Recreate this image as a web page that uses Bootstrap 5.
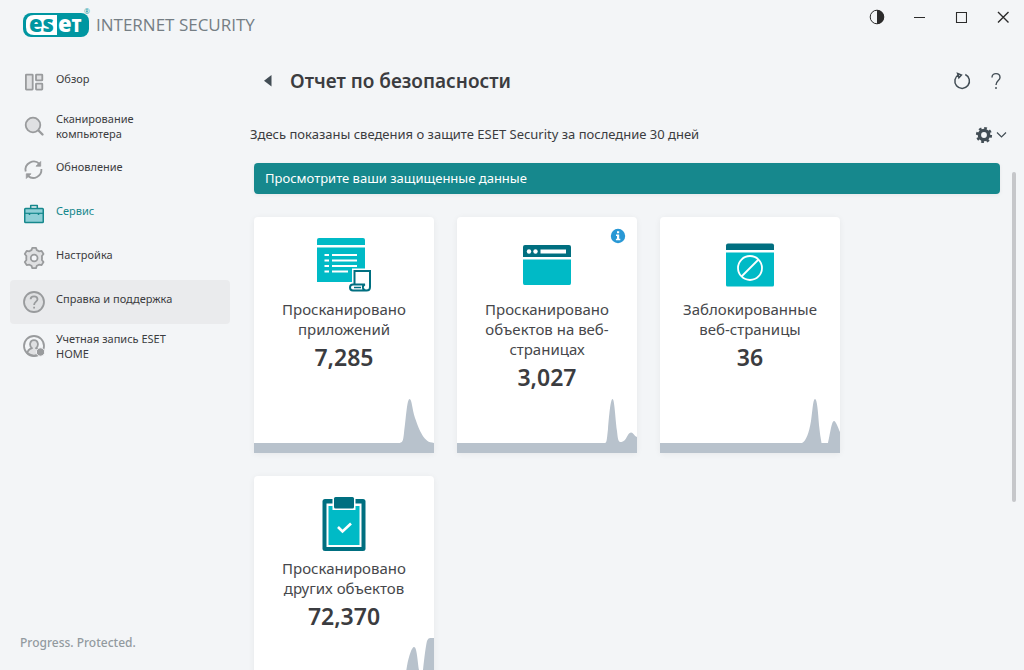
<!DOCTYPE html>
<html lang="ru">
<head>
<meta charset="utf-8">
<meta name="viewport" content="width=device-width, initial-scale=1">
<title>ESET Internet Security</title>
<link rel="stylesheet" href="https://cdn.jsdelivr.net/npm/bootstrap@5.3.0/dist/css/bootstrap.min.css">
<style>
  :root { --teal: #16888d; --aqua: #00bac6; --deep: #006f80; --ink: #3b3c40; --slate: #424d55; }
  body { font-family: "Noto Sans", "Open Sans", sans-serif; background: #f3f5f7; color: var(--ink); font-size: 13px; }
  svg { display: block; flex: none; }
  .topbar { height: 50px; padding-left: 20px; flex: none; }
  .product { font-family: "Open Sans", sans-serif; font-size: 17px; font-weight: 400; color: #757e84; line-height: 24px; }
  .tool { width: 42px; height: 34px; padding: 0; border: 0; color: #2b2b2b; display: flex; align-items: center; justify-content: center; }
  .tool-sm { width: 34px; color: var(--slate); }
  .sidebar { width: 240px; padding: 10px 10px 19px; flex: none; }
  .side-link { height: 44px; padding: 0 12px; gap: 10px; border-radius: 4px; font-size: 11px; line-height: 15px; color: var(--ink); text-decoration: none; }
  .side-link span { min-height: 23px; max-width: 124px; }
  .side-link:hover, .side-link.is-hover { background: #eaebed; }
  .side-link.is-active { color: var(--teal); }
  .ico { fill: #dfe0e2; stroke: #999b9d; stroke-width: 1.8; stroke-linejoin: round; }
  .slogan { font-size: 12px; font-weight: 500; line-height: 16px; color: #929a9f; padding-left: 10px; }
  .page-head { height: 42px; margin-top: 10px; padding-right: 11px; gap: 10px; flex: none; }
  .page-title { font-size: 19px; font-weight: 600; line-height: 26px; }
  .back { width: 24px; height: 28px; }
  .intro { height: 42px; margin: 12px 17px 7px 10px; flex: none; }
  .gear { gap: 3px; padding: 0; border: 0; color: var(--slate); }
  .banner { background: var(--teal); color: #fff; border-radius: 4px; line-height: 21px; padding: 5px 11px; font-size: 13px; border: 0; text-align: left; box-shadow: 0 1px 4px rgba(0,0,0,.06); }
  .report { padding: 0 8px 0 14px; gap: 12px; min-height: 0; }
  .tiles { gap: 23px; margin-top: 23px; }
  .tile { width: 180px; height: 236px; padding-top: 20px; border: 0; border-radius: 4px 4px 0 0; box-shadow: 0 1px 6px rgba(0,0,0,.06); overflow: hidden; flex: none; }
  .tile h2 { font-size: 15px; font-weight: 400; line-height: 20px; margin: 2px 16px 4px; color: #46474b; }
  .tile .total { font-size: 23px; font-weight: 600; line-height: 28px; }
  .chart { fill: #b8c2cc; width: 100%; }
  .info { position: absolute; top: 11px; right: 11px; }
  .thumb { width: 4px; height: 65%; margin-top: 9px; border-radius: 2px; background: #c6c7ca; flex: none; }
</style>
</head>
<body>
<div class="vh-100 d-flex flex-column overflow-hidden">
  <header class="topbar d-flex">
    <div class="d-flex align-items-center">
      <svg width="72" height="34" viewBox="20 8 72 34" role="img" aria-label="ESET">
        <rect x="23" y="13" width="66" height="24" rx="8" fill="#0096a1"/>
        <path d="M57 15H34Q26 15 26 23v4Q26 35 34 35H57z" fill="#fff"/>
        <g font-family="Open Sans, sans-serif" font-weight="800">
          <text x="29" y="32" font-size="22" fill="#0096a1">es</text>
          <text x="58" y="32" font-size="22" fill="#fff">e<tspan font-size="17">T</tspan></text>
          <text x="84" y="14" font-size="7" font-weight="400" fill="#0096a1">®</text>
        </g>
      </svg>
      <span class="product ms-1">INTERNET SECURITY</span>
    </div>
    <div class="d-flex ms-auto">
      <button class="btn tool" aria-label="Контрастность"><svg width="16" height="16" viewBox="0 0 16 16"><circle cx="8" cy="8" r="6.8" fill="none" stroke="currentColor"/><path d="M8 1a7 7 0 0 1 0 14z" fill="currentColor"/></svg></button>
      <button class="btn tool" aria-label="Свернуть"><svg width="12" height="12"><path d="M1 6.500h11" stroke="currentColor"/></svg></button>
      <button class="btn tool" aria-label="Развернуть"><svg width="12" height="12"><path d="M1.500 1.500h10v10h-10z" fill="none" stroke="currentColor" stroke-width="1.100"/></svg></button>
      <button class="btn tool" aria-label="Закрыть"><svg width="12" height="12"><path d="M1 1l10.500 10.500M11.500 1L1 11.500" stroke="currentColor" stroke-width="1.400"/></svg></button>
    </div>
  </header>

  <div class="d-flex flex-grow-1 overflow-hidden">
    <aside class="sidebar d-flex flex-column">
      <nav class="d-flex flex-column">
        <a href="#" class="side-link d-flex align-items-center">
          <svg class="ico" width="24" height="24"><rect x="3.900" y="4.600" width="6.800" height="15" rx=".5"/><rect x="14" y="4.600" width="6.300" height="5.800" rx=".5"/><rect x="14" y="13.600" width="6.300" height="6" rx=".5"/></svg>
          <span>Обзор</span></a>
        <a href="#" class="side-link d-flex align-items-center">
          <svg class="ico" width="24" height="24"><path d="M16.500 16.500l4 4" stroke-width="2.400" stroke-linecap="round"/><circle cx="11" cy="11" r="7.300"/></svg>
          <span>Сканирование компьютера</span></a>
        <a href="#" class="side-link d-flex align-items-center">
          <svg class="ico" width="24" height="24"><path fill="none" d="M3.700 13.500A8.200 8.200 0 0 1 17.500 6M19.400 11A8.200 8.200 0 0 1 6 18"/><path d="M18.700 3.500v4.700H14zM4.300 20.500v-4.700H9z" fill="#999b9d" stroke-width=".8"/></svg>
          <span>Обновление</span></a>
        <a href="#" class="side-link is-active d-flex align-items-center">
          <svg width="24" height="24" fill="#8ecfd6" stroke="#16888d" stroke-width="1.500" stroke-linejoin="round"><path fill="none" d="M8.700 6.500V3.500h6.600v3"/><rect x="2.750" y="6.500" width="18.500" height="14" rx=".8"/><path d="M3 11.300h18" stroke-width="1.200"/><path d="M7.500 11v2M16.500 11v2"/></svg>
          <span>Сервис</span></a>
        <a href="#" class="side-link d-flex align-items-center">
          <svg class="ico" width="24" height="24"><path d="M9.500 4.200L10.300 1.800H14L14.800 4.200Q16 4.600 17 5.400L19.600 4.900L21.500 8L19.900 10Q20.100 12 19.900 14L21.500 16L19.600 19.100L17 18.600Q16 19.400 14.800 19.800L14 22.200H10.300L9.500 19.800Q8.300 19.400 7.300 18.600L4.700 19.100L2.800 16L4.400 14Q4.200 12 4.400 10L2.800 8L4.700 4.900L7.300 5.400Q8.300 4.600 9.500 4.200z"/><circle cx="12.150" cy="12" r="3.400" fill="#f4f5f8"/></svg>
          <span>Настройка</span></a>
        <a href="#" class="side-link is-hover d-flex align-items-center">
          <svg class="ico" width="24" height="24"><circle cx="12" cy="12" r="10"/><path d="M8.600 9.300C8.600 5.300 15.500 5.300 15.500 9.300C15.500 11.800 12.100 11.600 12.100 15M12.100 16.700v1.800" fill="none"/></svg>
          <span>Справка и поддержка</span></a>
        <a href="#" class="side-link d-flex align-items-center">
          <svg class="ico" width="24" height="24"><circle cx="12" cy="12" r="10" fill="none"/><path d="M5.500 19.300C5.500 15.500 9 14.500 10 14.200C7 12 7.500 6.200 12 6.200C16.500 6.200 17 12 14 14.200C15 14.500 18.500 15.500 18.500 19.300Q12 24 5.500 19.300z"/><circle cx="18.500" cy="18" r="4.200" fill="#999b9d" stroke="#f4f5f8" stroke-width="1"/></svg>
          <span>Учетная запись ESET HOME</span></a>
      </nav>
      <div class="slogan mt-auto">Progress. Protected.</div>
    </aside>

    <main class="flex-grow-1 d-flex flex-column overflow-hidden">
      <div class="page-head d-flex align-items-center">
        <button class="btn back border-0 p-0 ms-3 d-flex align-items-center justify-content-center" aria-label="Назад"><svg width="8" height="12"><path d="M7.500 0v11.500L0 5.800z" fill="#424d55"/></svg></button>
        <h1 class="page-title mb-0">Отчет по безопасности</h1>
        <div class="d-flex ms-auto">
          <button class="btn tool tool-sm" aria-label="Обновить"><svg width="18" height="18" fill="none" stroke="currentColor" stroke-width="1.500"><path d="M12.300 2.500A7.300 7.300 0 1 1 5.800 2.600M4.600 1.500l3.800 1.600-2.500 2.600z"/></svg></button>
          <button class="btn tool tool-sm" aria-label="Справка"><svg width="12" height="18" fill="none" stroke="currentColor" stroke-width="1.400"><path d="M2 5.500C2 .3 10 .3 10 5.500C10 8.700 6 8.500 6 13M6 15v2"/></svg></button>
        </div>
      </div>

      <div class="intro d-flex align-items-center justify-content-between">
        <p class="mb-0">Здесь показаны сведения о защите ESET Security за последние 30 дней</p>
        <button class="btn gear d-flex align-items-center" aria-label="Параметры отчета">
          <svg width="18" height="18" fill="none" stroke="currentColor"><circle cx="9" cy="9" r="4.600" stroke-width="3.400"/><circle cx="9" cy="9" r="6.900" stroke-width="2.400" stroke-dasharray="2.710 2.709"/></svg>
          <svg width="11" height="8" fill="none" stroke="currentColor" stroke-width="1.200"><path d="M1 1.500l4.500 4.500L10 1.500"/></svg>
        </button>
      </div>

      <div class="report d-flex flex-grow-1">
        <div class="flex-grow-1">
          <button class="banner d-block w-100">Просмотрите ваши защищенные данные</button>
          <div class="tiles d-flex flex-wrap">

            <section class="card tile align-items-center text-center">
              <svg width="60" height="60">
                <path d="M3 8V3Q3 1 5 1H49Q51 1 51 3V8zM3 10.500H51V45H3z" fill="#00bac6"/>
                <path d="M10.500 18H15M18 18H43M10.500 23.500H15M18 23.500H43M10.500 29H15M18 29H43M10.500 34.500H15M18 34.500H34" stroke="#fff" stroke-width="2"/>
                <path d="M38 31.500H58V54H35V45H38z" fill="#fff"/>
                <g fill="#fff" stroke="#006f80" stroke-width="2"><path d="M40.500 47V34H56V50Q56 53.500 52.500 53.500H39Q36 53.500 36 50.500Q36 47.500 39 47.500H51Q48.500 48 49 51Q49.500 53.500 52 53.500"/><path d="M40 50.500H47" stroke-width="1.500"/></g>
              </svg>
              <h2>Просканировано приложений</h2>
              <div class="total">7,285</div>
              <svg class="chart mt-auto" height="56" viewBox="0 0 180 56" preserveAspectRatio="none"><path d="M0 46H144C149 46 149 44 150 36C152 22 153 2 155.500 2C158 2 158 12 161 21C164 29 169 45 178 45.500L180 46V56H0z"/></svg>
            </section>

            <section class="card tile align-items-center text-center">
              <svg class="info" width="16" height="16" role="img" aria-label="Сведения"><circle cx="8" cy="8" r="7.200" fill="#2998d5"/><path d="M7 3.300h2.200v2H7zM6 6.500h3.200v4.300h1.100v1.400H5.900v-1.400H7V7.900H6z" fill="#fff"/></svg>
              <svg width="60" height="60"><path d="M6 20V10Q6 8 8 8H52Q54 8 54 10V20z" fill="#006f80"/><path d="M6 22.500H54V46Q54 48 52.500 48H7.500Q6 48 6 46z" fill="#00bac6"/><g fill="#fff"><circle cx="12" cy="14.500" r="2.200"/><circle cx="18.500" cy="14.500" r="2.200"/><path d="M23.500 12.500H49V16.500H23.500z"/></g></svg>
              <h2>Просканировано объектов на веб-страницах</h2>
              <div class="total">3,027</div>
              <svg class="chart mt-auto" height="56" viewBox="0 0 180 56" preserveAspectRatio="none"><path d="M0 46H148C150 46 150 40 151 32C152 20 153.500 2 155.500 2C157.500 2 158 18 160 34C161 44 161.500 45 164.500 45C170 44 170 36 174 35.500C177 36 177 39 180 40V56H0z"/></svg>
            </section>

            <section class="card tile align-items-center text-center">
              <svg width="60" height="60"><path d="M6 13V8.500Q6 6.500 8 6.500H52Q54 6.500 54 8.500V13z" fill="#006f80"/><path d="M6 15.500H54V48Q54 49.500 52.500 49.500H7.500Q6 49.500 6 48z" fill="#00bac6"/><g fill="none" stroke="#fff" stroke-width="1.800"><circle cx="30" cy="31" r="12"/><path d="M21.500 39.500L38.500 22.500"/></g></svg>
              <h2>Заблокированные веб-страницы</h2>
              <div class="total">36</div>
              <svg class="chart mt-auto" height="56" viewBox="0 0 180 56" preserveAspectRatio="none"><path d="M0 46H142C146 44 149 36 151 24C152.500 14 153 2 155 2C157 2 158 14 159 28Q160 38 161.500 46H168C170 38 171.500 24 174 24C176 24 178 31 180 35V56H0z"/></svg>
            </section>

            <section class="card tile align-items-center text-center">
              <svg width="60" height="60"><rect x="8.500" y="3" width="43" height="52" rx="2.500" fill="#006f80"/><path d="M12.500 7.500H47.500V51H12.500z" fill="#fff"/><path d="M14.500 10H45.500V49H14.500z" fill="#00bac6"/><path d="M18.500 1H41.500V14H18.500z" fill="#fff"/><rect x="20" y="1" width="20" height="11.500" rx="1.500" fill="#006f80"/><path d="M24 31l4.500 4.500L37 27.500" fill="none" stroke="#fff" stroke-width="2.600"/></svg>
              <h2>Просканировано других объектов</h2>
              <div class="total">72,370</div>
              <svg class="chart mt-auto" height="75" viewBox="0 0 180 75" preserveAspectRatio="none"><path d="M0 65H145C150 62 151 40 153 29C155 18 158 10 160 10C163 10 163.500 24 165 33L167 52L169 33C170.500 19 172 8 173 4Q174 1 176 1H180V75H0z"/></svg>
            </section>

          </div>
        </div>
        <div class="thumb"></div>
      </div>
    </main>
  </div>
</div>
<script src="https://cdn.jsdelivr.net/npm/bootstrap@5.3.0/dist/js/bootstrap.bundle.min.js"></script>
</body>
</html>
